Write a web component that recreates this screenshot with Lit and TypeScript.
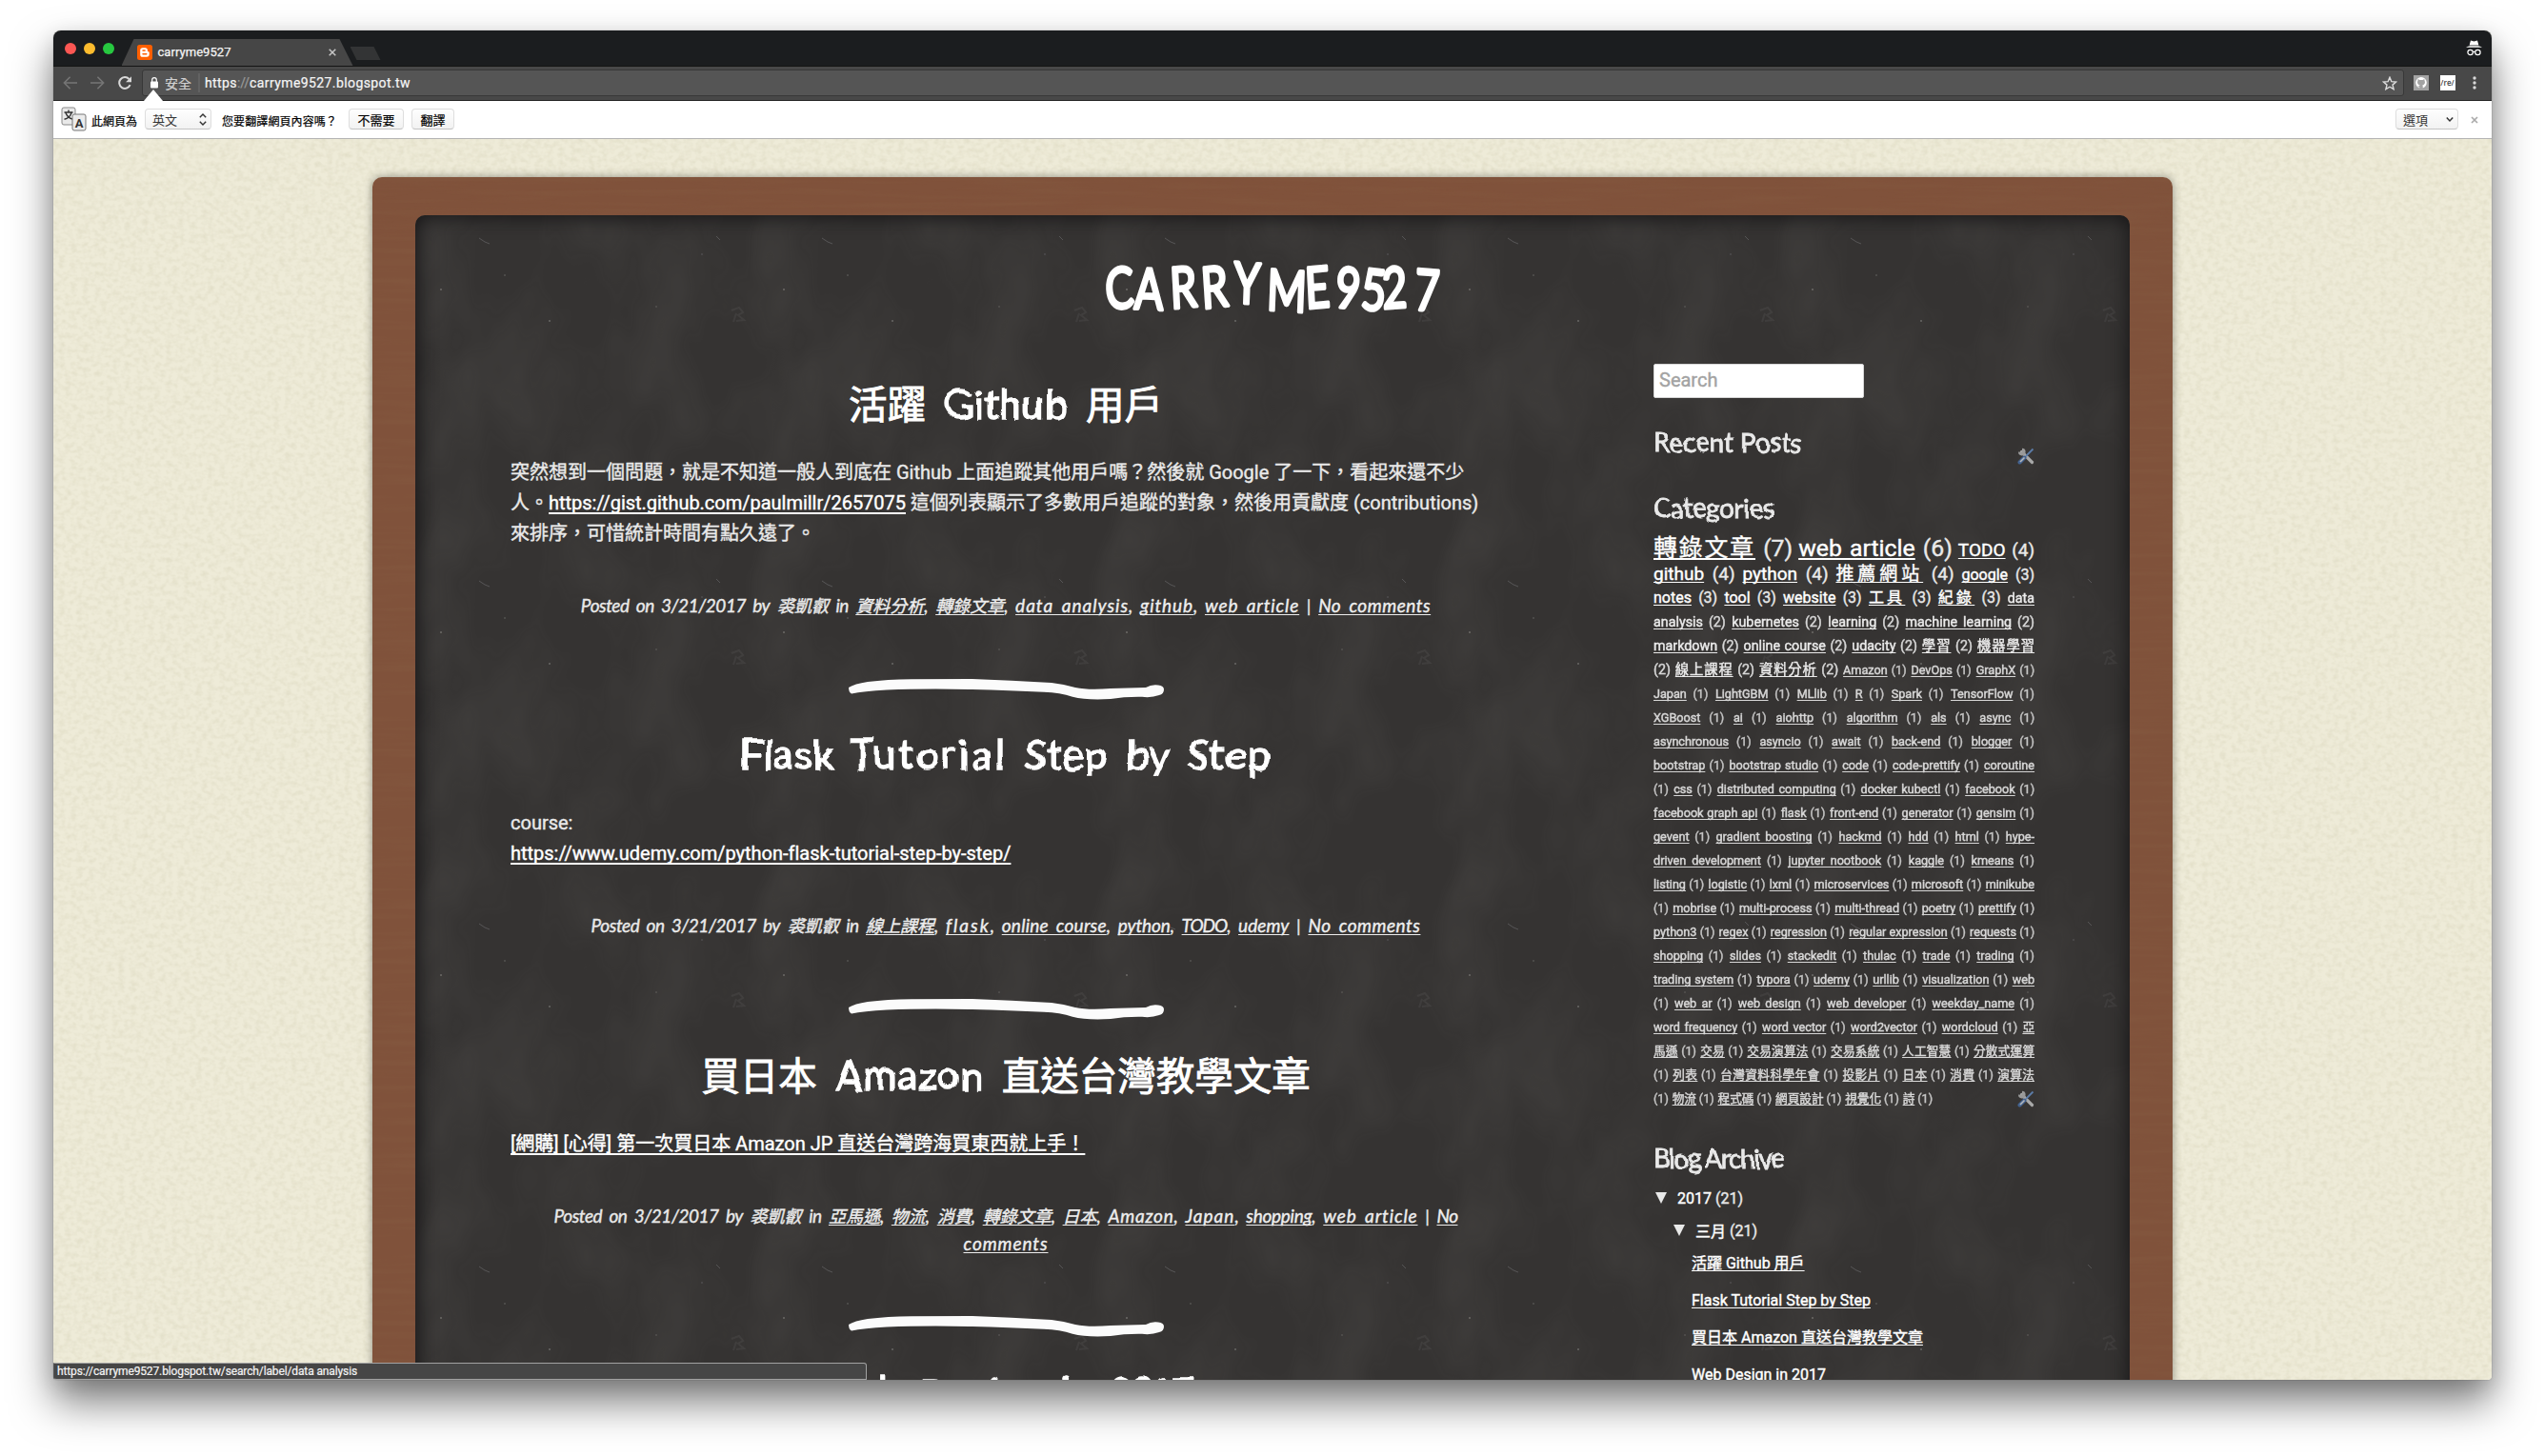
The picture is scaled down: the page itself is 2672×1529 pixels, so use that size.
import { LitElement, html, css, nothing } from "lit";
import { customElement, property } from "lit/decorators.js";

/** Base element: spreads the letters of [data-w] spans so that each reaches its set width. */
class FitElement extends LitElement {
  updated() {
    this.renderRoot.querySelectorAll<HTMLElement>("[data-w]").forEach((el) => {
      el.style.letterSpacing = "0px";
      const target = Number(el.dataset.w);
      const count = Array.from(el.textContent ?? "").length;
      const natural = el.getBoundingClientRect().width;
      el.style.letterSpacing = `${((target - natural) / count).toFixed(3)}px`;
    });
  }
}

const fit = (text: string, w: number) => html`<span data-w=${w}>${text}</span>`;

const shared = css`
  * { box-sizing: border-box; }
  svg { display: block; }
  .hand {
    font-family: Lato, "Noto Sans CJK TC", sans-serif;
    white-space: nowrap;
  }
`;

@customElement("browser-bars")
class BrowserBars extends FitElement {
  static styles = [shared, css`
    :host { display: block; position: relative; z-index: 2; font-family: Roboto, "Noto Sans CJK TC", sans-serif; }
    .tabs { height: 37px; background: #1b1d1f; display: flex; align-items: flex-end; padding: 0 10px 0 11.5px; }
    .lights { display: flex; gap: 8px; height: 37px; align-items: center; padding-top: 1px; }
    .light { width: 12px; height: 12px; border-radius: 50%; background: #fc5753; }
    .light.y { background: #fdbc2e; }
    .light.g { background: #27c840; }
    .tab { margin-left: 8px; width: 243px; height: 28px; background: #464646;
      clip-path: polygon(0 100%, 13px 0, 229px 0, 100% 100%);
      display: flex; align-items: center; padding: 0 18px 0 16px; color: #f4f4f4; font-size: 13px; }
    .tab .name { flex: 1; margin-left: 6px; line-height: 28px; -webkit-text-stroke: 0.25px; }
    .plus { width: 32px; height: 14px; background: #333435; margin: 0 0 6px -3px;
      clip-path: polygon(0 0, 25px 0, 32px 14px, 7px 14px); }
    .spy { margin-left: auto; align-self: center; margin-top: 0; }
    .tools { height: 37px; background: #484848; border-top: 1px solid #141414; border-bottom: 1px solid #232323;
      display: flex; align-items: center; padding: 0 16.5px 1px 10px; }
    .nav { display: flex; gap: 14px; margin-right: 9.5px; }
    .omni { flex: 1; height: 28px; border: 1px solid #383838; border-radius: 3px; background: #555;
      display: flex; align-items: center; padding: 0 6px 0 8px; font-size: 14px; color: #f5f5f5; -webkit-text-stroke: 0.2px; }
    .safe { color: #d0d0d0; margin: 0 7px 0 7.5px; }
    .bar { width: 2px; height: 20px; background: #626262; margin-right: 5px; }
    .dim { color: #9a9a9a; }
    .omni svg:last-child { margin-left: auto; }
    .ext { margin-left: 10px; width: 16px; height: 16px; }
    .re { background: #fff; color: #444; font: 600 8px/16px "Open Sans", sans-serif; text-align: center; margin: 0 18px 0 12px; }
    .trans { height: 40px; background: #fff; border-bottom: 1px solid #b4b4b4; display: flex; align-items: center;
      padding: 0 14px 1px 8px; font-size: 12px; color: #000; -webkit-text-stroke: 0.2px; }
    .trans .t { padding-top: 3px; }
    .btn { height: 22px; border: 1px solid #dedede; border-bottom-color: #c4c4c4; border-radius: 4px;
      background: linear-gradient(#fefefe, #f2f2f2); display: flex; align-items: center; justify-content: space-between;
      padding: 0 4px 0 7px; font-size: 13px; color: #333; -webkit-text-stroke: 0; }
    .btn.c { padding: 0; justify-content: center; color: #000; -webkit-text-stroke: 0.2px; }
    .w1 { width: 70px; margin-left: 8px; }
    .w2 { width: 58px; margin-left: 12px; }
    .w3 { width: 45px; margin-left: 8px; }
    .w4 { width: 66px; margin-left: auto; }
    .t1 { margin-left: 5px; }
    .t2 { margin-left: 11px; }
    .x { margin: 2px 0 0 13px; }
    .notch { position: absolute; left: 95px; top: 62px; width: 0; border: 10.5px solid transparent;
      border-top: 0; border-bottom: 12px solid #fff; }
  `];

  render() {
    return html`
      <div class="tabs">
        <div class="lights"><div class="light"></div><div class="light y"></div><div class="light g"></div></div>
        <div class="tab">
          <svg width="16" height="16" viewBox="0 0 16 16"><rect width="16" height="16" rx="2.5" fill="#ff5f00"/>
            <path d="M5.8 3.2h2.6a2.5 2.5 0 0 1 2.5 2.5v.7c0 .5.3.8.8.8.6 0 1 .4 1 1v1.9a2.7 2.7 0 0 1-2.7 2.7H5.8a2.6 2.6 0 0 1-2.6-2.6V5.8a2.6 2.6 0 0 1 2.6-2.6z" fill="#fff"/>
            <path d="M6 6h2.1M6 9.7h3.8" stroke="#ff5f00" stroke-width="1.5" stroke-linecap="round"/></svg>
          <span class="name">${fit("carryme9527", 77)}</span>
          <svg width="8" height="8" viewBox="0 0 8 8"><path d="M.7.7l6.6 6.6M7.3.7L.7 7.3" stroke="#c6c6c6" stroke-width="1.5"/></svg>
        </div>
        <div class="plus"></div>
        <svg class="spy" width="17" height="17" viewBox="0 0 17 17"><path d="M3.600 5.500L5 .6l3.500 1 3.500-1 1.400 4.900z" fill="#fff"/><path d="M0 7.800Q2 6.300 4 6.300h9q2 0 4 1.500z" fill="#fff"/>
          <g fill="none" stroke="#fff" stroke-width="1.2"><circle cx="4.6" cy="13" r="2.7"/><circle cx="12.4" cy="13" r="2.7"/><path d="M7.2 12.8q1.3-1 2.6 0"/></g></svg>
      </div>
      <div class="tools">
        <div class="nav">
          <svg width="15" height="14" viewBox="0 0 15 14"><path d="M15 7H1.6M7.6.8L1.4 7l6.2 6.2" fill="none" stroke="#757575" stroke-width="1.6"/></svg>
          <svg width="15" height="14" viewBox="0 0 15 14"><path d="M0 7h13.4M7.4.8L13.6 7l-6.2 6.2" fill="none" stroke="#757575" stroke-width="1.6"/></svg>
          <svg width="15" height="14" viewBox="0 0 15 14"><path d="M12.6 9.2A5.9 5.9 0 1 1 11.5 3" fill="none" stroke="#d8d8d8" stroke-width="2"/><path d="M14 .3v5.9H8.1z" fill="#d8d8d8"/></svg>
        </div>
        <div class="omni">
          <svg width="8" height="12" viewBox="0 0 8 12"><rect y="4.6" width="8" height="7" rx="1" fill="#fff"/><path d="M1.7 5V3a2.3 2.3 0 0 1 4.6 0v2" fill="none" stroke="#fff" stroke-width="1.2"/></svg>
          <span class="safe">${fit("安全", 28)}</span><span class="bar"></span>
          <span>${fit("https", 34)}<span class="dim">${fit("://", 13)}</span>${fit("carryme9527.blogspot.tw", 169)}</span>
          <svg width="16" height="15" viewBox="0 0 16 15"><path d="M8 1.2l1.8 4.4 4.8.4-3.6 3.1 1.1 4.6L8 11.2l-4.1 2.5L5 9.1 1.4 6l4.8-.4z" fill="none" stroke="#dcdcdc" stroke-width="1.4"/></svg>
        </div>
        <svg class="ext" viewBox="0 0 16 16"><rect width="16" height="16" fill="#a3a3a3"/>
          <circle cx="8" cy="7.800" r="5.800" fill="#fff"/>
          <path d="M4.700 4l1.700.9h3.200l1.700-.9.3 1.800q1 2.700-.7 4-.9.600-1.700.700.5.500.5 1.300V14H6.300v-1.600q-1.500.1-2.100-1.200 1.200.6 2.200-.1l.3-.600q-.9-.1-1.600-.700-1.700-1.300-.7-4z" fill="#a3a3a3"/></svg>
        <div class="ext re">/re/</div>
        <svg width="4" height="14" viewBox="0 0 4 14"><g fill="#d8d8d8"><circle cx="2" cy="2" r="1.7"/><circle cx="2" cy="7" r="1.7"/><circle cx="2" cy="12" r="1.7"/></g></svg>
      </div>
      <div class="trans">
        <svg width="27" height="26" viewBox="0 0 27 26"><rect x="1" y="1" width="14" height="18" rx="2" fill="#e9e9e9" stroke="#888"/>
          <path d="M3.500 6h9M8 3.500V6M5 6.500c1 3 3.500 5.500 7 6.500M11 6.500c-1 3.500-4 6-7.500 6.800" stroke="#333" stroke-width="1.400" fill="none"/>
          <rect x="12" y="8" width="14" height="17" rx="2" fill="#ececec" stroke="#777"/>
          <text x="19" y="21.500" font-size="13" font-weight="700" text-anchor="middle" font-family="Roboto" fill="#333">A</text></svg>
        <span class="t t1">${fit("此網頁為", 48)}</span>
        <div class="btn w1">英文
          <svg width="8" height="13" viewBox="0 0 8 13"><path d="M.8 4.200L4 1l3.200 3.200M.8 8.800L4 12l3.200-3.200" fill="none" stroke="#333" stroke-width="1.400"/></svg></div>
        <span class="t t2">${fit("您要翻譯網頁內容嗎？", 121)}</span>
        <div class="btn c w2">${fit("不需要", 39)}</div>
        <div class="btn c w3">${fit("翻譯", 26)}</div>
        <div class="btn w4">選項
          <svg width="8" height="5" viewBox="0 0 8 5"><path d="M.8.6L4 3.900 7.200.6" fill="none" stroke="#333" stroke-width="1.500"/></svg></div>
        <svg class="x" width="8" height="8" viewBox="0 0 8 8"><path d="M1 1l6 6M7 1L1 7" stroke="#aaa" stroke-width="1.700"/></svg>
      </div>
      <div class="notch"></div>`;
  }
}

type Meta = [text: string, width: number, link: boolean];

interface Post {
  title: [string, number][];
  body: unknown;
  meta: Meta[][];
}

@customElement("blog-post")
class BlogPost extends FitElement {
  static styles = [shared, css`
    :host { display: block; }
    h2 { margin: 0 0 25px; height: 60px; font-size: 43px; line-height: 58px; font-weight: 400; text-align: center;
      color: #fff; -webkit-text-stroke: 1.4px #fff; word-spacing: 8px; }
    .wob { filter: url(#wobble); }
    .cjk { font-size: 40.500px; line-height: 50px; -webkit-text-stroke: 0.9px #fff; word-spacing: 0; }
    .body { font-size: 20px; line-height: 32px; color: #e9e9e9; white-space: nowrap; -webkit-text-stroke: 0.4px; }
    .line { height: 32px; }
    a { color: #fff; text-decoration: underline; text-underline-offset: 3px; text-decoration-thickness: 2px; text-decoration-skip-ink: none; }
    .meta { margin: 46px 0 62.100px; text-align: center; font-style: italic; font-size: 19px; color: #e9e9e9; -webkit-text-stroke: 0.4px; }
    .meta .row { height: 28.800px; line-height: 28.800px; word-spacing: 3.200px; }
    .meta .cj { font-size: 18px; line-height: 20px; }
    .meta a { color: #eee; text-decoration-thickness: 1px; text-underline-offset: 2px; }
    .rule { margin: 0 auto 28.500px; width: 331px; }
    .defs { position: absolute; }
  `];

  @property({ attribute: false }) post!: Post;

  render() {
    const { title, body, meta } = this.post;
    return html`
      <svg class="defs" width="0" height="0"><filter id="wobble" x="-10%" y="-20%" width="120%" height="140%">
        <feTurbulence type="fractalNoise" baseFrequency="0.04" numOctaves="1" seed="4"/>
        <feDisplacementMap in="SourceGraphic" scale="9" xChannelSelector="R" yChannelSelector="G"/></filter></svg>
      <h2 class="hand">${title.map(([t, w], i) => html`${i ? " " : nothing}${w ? html`<span class="wob">${fit(t, w)}</span>` : html`<span class="cjk">${t}</span>`}`)}</h2>
      <div class="body">${body}</div>
      <div class="meta hand">${meta.map((row) => html`<div class="row">${row.map(([t, w, link], i) => {
        const inner = w ? fit(t, w) : html`<span class="cj">${t}</span>`;
        const next = row[i + 1];
        return html`${link ? html`<a>${inner}</a>` : inner}${link && next && next[2] && t !== "No" ? ", " : " "}`;
      })}</div>`)}</div>
      <svg class="rule" width="331" height="22" viewBox="0 0 331 22"><path fill="#fbfbfb"
        d="M0 9Q6 5 20 3Q40 .5 66 .2L130 .1Q170 1.500 213 4Q226 5.500 238 9Q252 12 275 10L312 9Q318 5.500 325 6.500Q331 7 331 11Q331 16 326 17Q318 20 308 18.800Q290 18.500 275 21Q250 22.500 235 18.800Q222 14.500 205 13.800Q170 12 130 11Q80 10 40 11.500Q15 12.800 3 15.500Q0 14 0 9z"/></svg>`;
  }
}

const CLOUD = [
  "轉錄文章:7|web article:6|TODO:4",
  "github:4|python:4|推薦網站:4|google:3",
  "notes:3|tool:3|website:3|工具:3|紀錄:3|data~2",
  "analysis:2|kubernetes:2|learning:2|machine learning:2",
  "markdown:2|online course:2|udacity:2|學習:2|機器學習~2",
  ":2|線上課程:2|資料分析:2|Amazon:1|DevOps:1|GraphX:1",
  "Japan:1|LightGBM:1|MLlib:1|R:1|Spark:1|TensorFlow:1",
  "XGBoost:1|ai:1|aiohttp:1|algorithm:1|als:1|async:1",
  "asynchronous:1|asyncio:1|await:1|back-end:1|blogger:1",
  "bootstrap:1|bootstrap studio:1|code:1|code-prettify:1|coroutine~1",
  ":1|css:1|distributed computing:1|docker kubectl:1|facebook:1",
  "facebook graph api:1|flask:1|front-end:1|generator:1|gensim:1",
  "gevent:1|gradient boosting:1|hackmd:1|hdd:1|html:1|hype-~1",
  "driven development:1|jupyter nootbook:1|kaggle:1|kmeans:1",
  "listing:1|logistic:1|lxml:1|microservices:1|microsoft:1|minikube~1",
  ":1|mobrise:1|multi-process:1|multi-thread:1|poetry:1|prettify:1",
  "python3:1|regex:1|regression:1|regular expression:1|requests:1",
  "shopping:1|slides:1|stackedit:1|thulac:1|trade:1|trading:1",
  "trading system:1|typora:1|udemy:1|urllib:1|visualization:1|web~1",
  ":1|web ar:1|web design:1|web developer:1|weekday_name:1",
  "word frequency:1|word vector:1|word2vector:1|wordcloud:1|亞~1",
  "馬遜:1|交易:1|交易演算法:1|交易系統:1|人工智慧:1|分散式運算~1",
  ":1|列表:1|台灣資料科學年會:1|投影片:1|日本:1|消費:1|演算法~1",
  ":1|物流:1|程式碼:1|網頁設計:1|視覺化:1|詩:1",
].map((row) => row.split("|").map((item) => {
  const [, name, mark, n] = /^(.*)([:~])(\d)$/.exec(item)!;
  return { name, n: Number(n), counted: mark === ":" };
}));

@customElement("side-column")
class SideColumn extends FitElement {
  static styles = [shared, css`
    :host { display: block; width: 400px; color: #e9e9e9; font-size: 16px; -webkit-text-stroke: 0.4px; }
    .search { width: 221px; height: 36px; border: 1px solid #d6d6d6; border-radius: 2px; background: #fff; color: #a3a3a3;
      font-size: 20px; line-height: 33px; padding-left: 5px; }
    h3 { margin: 0; font-size: 28px; line-height: 38px; height: 40px; font-weight: 400; -webkit-text-stroke: 0.8px; filter: url(#sway); }
    .recent { margin-top: 27px; }
    .wrench { width: 18px; height: 18px; margin: -15px 0 0 382px; }
    .cats { margin-top: 26px; }
    .cloud { margin-top: 8.500px; }
    .row { height: 25px; line-height: 25px; white-space: nowrap; text-align: justify; text-align-last: justify; }
    .row:first-child { height: 27px; }
    .row:nth-child(2) { height: 25px; }
    .row:last-child { text-align-last: left; word-spacing: -0.200px; }
    .cloud a { color: #fff; text-decoration: underline; text-underline-offset: 2px; text-decoration-skip-ink: none; }
    .s5 { font-size: 24.800px; } .s4 { font-size: 19px; } .s3 { font-size: 16px; }
    .s2 { font-size: 14.300px; opacity: 0.9; } .s1 { font-size: 12.650px; opacity: 0.8; }
    .lower { margin-top: -20px; }
    .arch { margin-top: 34.500px; }
    .node { display: flex; align-items: center; height: 34px; color: #fff; }
    .node svg { margin: 0 11px 0 2px; }
    .year { margin-top: 4px; }
    .month { margin-left: 19px; }
    .links { margin: 1px 0 0 40px; }
    .links div { height: 39px; line-height: 34px; white-space: nowrap; }
    .links a { color: #fff; text-decoration: underline; text-underline-offset: 2px; text-decoration-skip-ink: none; }
    .n { color: #e9e9e9; margin-left: 4px; }
    .defs { position: absolute; }
  `];

  private wrench(cls: string) {
    return html`<svg class="wrench ${cls}" viewBox="0 0 18 18"><path d="M4.500 4.500L15.500 15.500" stroke="#a9a9a9" stroke-width="3.200" stroke-linecap="round"/>
      <path d="M1 4.500A3.800 3.800 0 1 0 5 .8L5 4 3.500 4.800z" fill="#999"/>
      <path d="M16.500 1.500L9 9" stroke="#5c7ca8" stroke-width="1.800"/><path d="M7.500 10.500l-5 5" stroke="#43628f" stroke-width="4" stroke-linecap="round"/>
      <path d="M7.500 10.500l-4.500 4.500" stroke="#b5b8bd" stroke-width="1.600"/></svg>`;
  }

  private arrow() {
    return html`<svg width="12" height="12" viewBox="0 0 12 12"><path d="M0 0h12L6 12z" fill="#e9e9e9"/></svg>`;
  }

  render() {
    const size = (n: number) => (n > 5 ? "s5" : `s${n}`);
    return html`
      <svg class="defs" width="0" height="0"><filter id="sway" x="-5%" y="-20%" width="110%" height="140%">
        <feTurbulence type="fractalNoise" baseFrequency="0.05" numOctaves="1" seed="8"/>
        <feDisplacementMap in="SourceGraphic" scale="6" xChannelSelector="R" yChannelSelector="G"/></filter></svg>
      <div class="search">Search</div>
      <h3 class="hand recent">${fit("Recent Posts", 156)}</h3>
      ${this.wrench("")}
      <h3 class="hand cats">${fit("Categories", 126)}</h3>
      <div class="cloud">${CLOUD.map((row) => html`<div class="row">${row.map(({ name, n, counted }) =>
        html`<span class=${size(n)}>${name ? html`<a>${name}</a>` : nothing}${name && counted ? " " : nothing}${counted ? `(${n})` : nothing}</span> `)}</div>`)}</div>
      ${this.wrench("lower")}
      <h3 class="hand arch">${fit("Blog Archive", 136)}</h3>
      <div class="node year">${this.arrow()}${fit("2017", 36)}<span class="n">(21)</span></div>
      <div class="node month">${this.arrow()}三月<span class="n">(21)</span></div>
      <div class="links">${["活躍 Github 用戶", "Flask Tutorial Step by Step", "買日本 Amazon 直送台灣教學文章", "Web Design in 2017"]
        .map((t) => html`<div><a>${t}</a></div>`)}</div>`;
  }
}

const by: Meta[] = [["Posted on 3/21/2017 by", 198, false], ["裘凱叡", 0, false], ["in", 13, false]];
const tail: Meta[] = [["|", 0, false]];

const POSTS: Post[] = [
  {
    title: [["活躍", 0], ["Github", 130], ["用戶", 0]],
    body: html`<div class="line">突然想到一個問題，就是不知道一般人到底在 Github 上面追蹤其他用戶嗎？然後就 Google 了一下，看起來還不少</div>
      <div class="line">人。<a>${fit("https://gist.github.com/paulmillr/2657075", 375)}</a> 這個列表顯示了多數用戶追蹤的對象，然後用貢獻度 (contributions)</div>
      <div class="line">來排序，可惜統計時間有點久遠了。</div>`,
    meta: [[...by, ["資料分析", 0, true], ["轉錄文章", 0, true], ["data analysis", 119, true], ["github", 56, true],
      ["web article", 99, true], ...tail, ["No comments", 118, true]]],
  },
  {
    title: [["Flask", 98], ["Tutorial", 164], ["Step", 88], ["by", 44], ["Step", 88]],
    body: html`<div class="line">course:</div><div class="line"><a>${fit("https://www.udemy.com/python-flask-tutorial-step-by-step/", 525)}</a></div>`,
    meta: [[...by, ["線上課程", 0, true], ["flask", 47, true], ["online course", 110, true], ["python", 55, true],
      ["TODO", 47, true], ["udemy", 53, true], ...tail, ["No comments", 118, true]]],
  },
  {
    title: [["買日本", 0], ["Amazon", 156], ["直送台灣教學文章", 0]],
    body: html`<div class="line"><a>[網購] [心得] 第一次買日本 Amazon JP 直送台灣跨海買東西就上手！</a></div>`,
    meta: [[...by, ["亞馬遜", 0, true], ["物流", 0, true], ["消費", 0, true], ["轉錄文章", 0, true], ["日本", 0, true],
      ["Amazon", 69, true], ["Japan", 52, true], ["shopping", 69, true], ["web article", 99, true], ...tail, ["No", 22, true]],
      [["comments", 89, true]]],
  },
  {
    title: [["Web", 82], ["Design", 130], ["in", 32], ["2017", 84]],
    body: nothing,
    meta: [],
  },
];

@customElement("app-root")
class AppRoot extends FitElement {
  static styles = [shared, css`
    :host { display: block; width: 2672px; height: 1529px; background: #fff; padding: 32px 56px 0; box-sizing: border-box; overflow: hidden;
      font-family: Roboto, "Noto Sans CJK TC", sans-serif; }
    .window { position: relative; height: 1417px; border-radius: 8px 8px 4px 4px;
      box-shadow: 0 0 1px rgba(0,0,0,.6), 0 24px 44px rgba(0,0,0,.5), 0 6px 22px rgba(0,0,0,.12); }
    .clip { height: 1417px; border-radius: 8px 8px 4px 4px; overflow: hidden; display: flex; flex-direction: column; background: #eeebd8; }
    .page { position: relative; flex: 1; min-height: 0; padding: 40px 335px 0 335px; overflow: hidden; }
    .grain { position: absolute; inset: 0; width: 100%; height: 100%; }
    .frame { position: relative; height: 1300px; border-radius: 10px; padding: 40px 45px 0; background: #80523b; overflow: hidden; }
    .halo { position: relative; border-radius: 10px; box-shadow: 0 0 10px rgba(0,0,0,.4); }
    .board { position: relative; height: 1260px; border-radius: 10px 10px 0 0; background: #353332; overflow: hidden; }
    .inner { position: relative; height: 1260px; border-radius: 10px 10px 0 0; box-shadow: inset 0 0 20px 2px #161516; }
    .brand { margin: 0 auto; padding-top: 34px; width: 360px; height: 156px; }
    .brand svg { overflow: visible; }
    .cols { display: flex; padding: 0 100px; justify-content: space-between; align-items: flex-start; }
    .main { width: 1040px; padding-top: 13px; }
    .status { position: absolute; left: 0; bottom: 0; width: 854px; height: 18px; border: 1px solid #a2a2a2; border-left-color: #555; border-radius: 0 3px 0 3px;
      background: #464646; color: #f4f4f4; font-size: 12px; line-height: 16px; padding-left: 3px; -webkit-text-stroke: 0.2px; }
  `];

  render() {
    return html`
      <div class="window"><div class="clip">
        <browser-bars></browser-bars>
        <div class="page">
          <svg class="grain">
            <filter id="paper" x="0" y="0" width="100%" height="100%"><feTurbulence type="fractalNoise" baseFrequency="0.16 0.2" numOctaves="2" seed="3"/>
              <feColorMatrix values="0 0 0 0 .62  0 0 0 0 .59  0 0 0 0 .42  1.600 0 0 0 -0.620"/></filter>
            <rect width="100%" height="100%" filter="url(#paper)" opacity=".42"/></svg>
          <div class="halo"><div class="frame">
            <svg class="grain">
              <filter id="wood" x="0" y="0" width="100%" height="100%"><feTurbulence type="fractalNoise" baseFrequency="0.008 0.15" numOctaves="3" seed="5"/>
                <feColorMatrix values="0 0 0 0 .25  0 0 0 0 .12  0 0 0 0 .06  1.500 0 0 0 -0.600"/></filter>
              <rect width="100%" height="100%" filter="url(#wood)" opacity=".4"/></svg>
            <div class="board">
              <svg class="grain">
                <defs>
                  <filter id="smudge" x="0" y="0" width="100%" height="100%"><feTurbulence type="fractalNoise" baseFrequency="0.014 0.009" numOctaves="3" seed="11" stitchTiles="stitch"/>
                    <feColorMatrix values="0 0 0 0 .55  0 0 0 0 .54  0 0 0 0 .5  1.500 0 0 0 -0.600"/></filter>
                  <pattern id="slate" width="360" height="360" patternUnits="userSpaceOnUse">
                    <rect width="360" height="360" filter="url(#smudge)" opacity=".085"/>
                    <path d="M67 24l6 4 5 2M316 22l4 4M301 40v2" stroke="#77777a" stroke-width="1" fill="none" opacity=".5"/>
                    <path d="M332 100l8-3 4 5-5 3 6 5-8 1M334 112l3-9" stroke="#77777a" stroke-width="2" fill="none" opacity=".15"/>
                    <g fill="#9a9a96" opacity=".5"><circle cx="94" cy="63" r=".8"/><circle cx="27" cy="78" r="1"/><circle cx="141" cy="111" r="1"/><circle cx="253" cy="96" r=".7"/></g>
                  </pattern>
                </defs>
                <rect width="100%" height="100%" fill="url(#slate)"/></svg>
              <div class="inner">
                <div class="brand"><svg width="360" height="80">
                  <g transform="scale(.8 1.07)">
                  <text x="7 43 92 133 173 217 269 306 340 370 411" y="61 60 60 60 54 61 60 58 60 60 61" rotate="-4 2 -4 -5 3 3 -4 6 5 -3 3"
                    font-family="Lato" font-size="56" fill="#fff" stroke="#fff" stroke-width="3.200" stroke-linejoin="round">CARRYME9527</text></g></svg></div>
                <div class="cols">
                  <div class="main">${POSTS.map((p) => html`<blog-post .post=${p}></blog-post>`)}</div>
                  <side-column></side-column>
                </div>
              </div>
            </div>
          </div></div>
        </div>
      </div>
      <div class="status">${fit("https://carryme9527.blogspot.tw/search/label/data analysis", 315)}</div>
      </div>`;
  }
}
